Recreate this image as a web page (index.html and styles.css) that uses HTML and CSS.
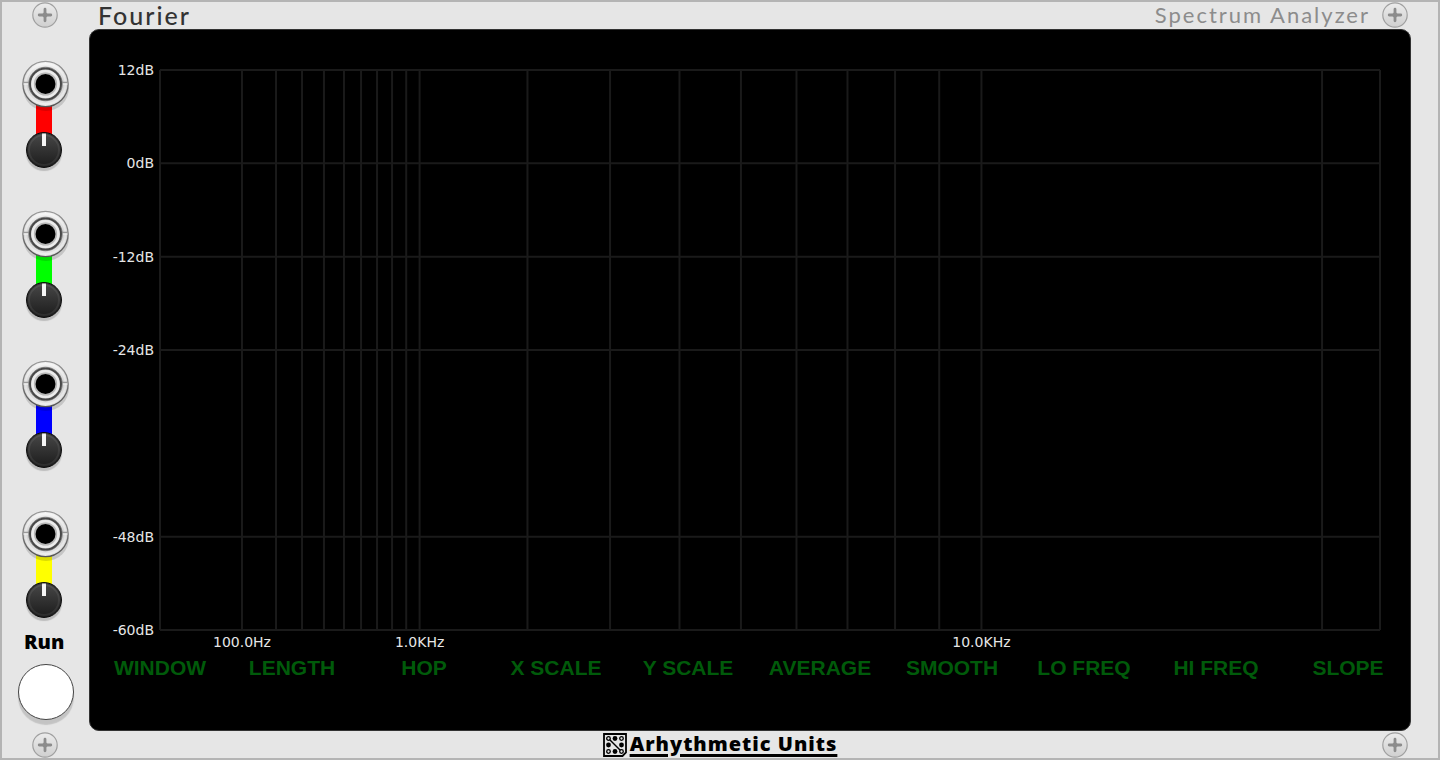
FILE: index.html
```html
<!DOCTYPE html>
<html lang="en">
<head>
<meta charset="utf-8">
<title>Fourier – Spectrum Analyzer</title>
<link rel="stylesheet" href="styles.css">
</head>
<body>
<svg class="defs" aria-hidden="true">
  <defs>
    <linearGradient id="metal" x1="0" y1="0" x2="0" y2="1"><stop offset="0" stop-color="#ececec"/><stop offset="1" stop-color="#cfcfcf"/></linearGradient>
    <linearGradient id="ring" x1="0" y1="0" x2="0" y2="1"><stop offset="0" stop-color="#f4f4f4"/><stop offset=".5" stop-color="#d2d2d2"/><stop offset="1" stop-color="#e6e6e6"/></linearGradient>
    <linearGradient id="rim" x1="0" y1="0" x2="0" y2="1"><stop offset="0" stop-color="#999"/><stop offset="1" stop-color="#555"/></linearGradient>
    <symbol id="screw" viewBox="0 0 26 26">
      <circle cx="13" cy="13" r="12.2" fill="url(#metal)" stroke="#a0a0a0" stroke-width="1.2"/>
      <path d="M13 7.2v11.600M7.200 13h11.600" stroke="#8c8c8c" stroke-width="2.800" stroke-linecap="round"/>
      <path d="M9.500 13L13 9.500 16.500 13 13 16.500z" fill="#8c8c8c"/>
    </symbol>
    <symbol id="jack" viewBox="0 0 50 54">
      <circle cx="25" cy="28" r="23" fill="#000" opacity=".14"/>
      <circle cx="24.500" cy="24" r="22.600" fill="url(#ring)" stroke="url(#rim)" stroke-width="1.300"/>
      <circle cx="24.500" cy="24" r="20" fill="none" stroke="#fff" stroke-opacity=".35" stroke-width="2"/>
      <path d="M2.500 22.500h6M40.500 22.500h6" stroke="#999" stroke-width="1.500"/>
      <path d="M2.500 24h6M40.500 24h6" stroke="#f5f5f5" stroke-width="1.200"/>
      <circle cx="24.500" cy="24" r="16.800" fill="none" stroke="#888" stroke-width="1"/>
      <circle cx="24.500" cy="24" r="15.500" fill="#d4d4d4" stroke="#484848" stroke-width="2"/>
      <circle cx="24.500" cy="24" r="12.800" fill="none" stroke="#ececec" stroke-width="2.500"/>
      <circle cx="24.500" cy="24" r="10.800" fill="none" stroke="#b8b8b8" stroke-width="1.600"/>
      <circle cx="24.500" cy="24" r="10" fill="#000"/>
    </symbol>
  </defs>
</svg>
<div class="module">
  <header class="rail">
    <svg class="screw"><use href="#screw"/></svg>
    <h1 class="title">Fourier</h1>
    <p class="subtitle">Spectrum Analyzer</p>
    <svg class="screw"><use href="#screw"/></svg>
  </header>
  <main class="body">
    <aside class="controls">
      <div class="channel red">
        <button class="port" aria-label="Input 1"><svg class="jack"><use href="#jack"/></svg></button>
        <input class="knob" type="range" aria-label="Gain 1">
      </div>
      <div class="channel green">
        <button class="port" aria-label="Input 2"><svg class="jack"><use href="#jack"/></svg></button>
        <input class="knob" type="range" aria-label="Gain 2">
      </div>
      <div class="channel blue">
        <button class="port" aria-label="Input 3"><svg class="jack"><use href="#jack"/></svg></button>
        <input class="knob" type="range" aria-label="Gain 3">
      </div>
      <div class="channel yellow">
        <button class="port" aria-label="Input 4"><svg class="jack"><use href="#jack"/></svg></button>
        <input class="knob" type="range" aria-label="Gain 4">
      </div>
      <div class="run">
        <span class="run-label" id="run-label">Run</span>
        <button class="run-button" aria-labelledby="run-label"></button>
      </div>
    </aside>
    <section class="screen">
      <div class="chart">
        <svg class="plot" aria-label="Spectrum">
          <g class="lines">
            <line x1="0" x2="100%" y1="0" y2="0"/>
            <line x1="0" x2="100%" y1="16.67%" y2="16.67%"/>
            <line x1="0" x2="100%" y1="33.33%" y2="33.33%"/>
            <line x1="0" x2="100%" y1="50%" y2="50%"/>
            <line x1="0" x2="100%" y1="83.33%" y2="83.33%"/>
            <line x1="0" x2="100%" y1="100%" y2="100%"/>
            <line x1="0" x2="0" y1="0" y2="100%"/>
            <line x1="6.72%" x2="6.72%" y1="0" y2="100%"/>
            <line x1="9.51%" x2="9.51%" y1="0" y2="100%"/>
            <line x1="11.64%" x2="11.64%" y1="0" y2="100%"/>
            <line x1="13.44%" x2="13.44%" y1="0" y2="100%"/>
            <line x1="15.08%" x2="15.08%" y1="0" y2="100%"/>
            <line x1="16.48%" x2="16.48%" y1="0" y2="100%"/>
            <line x1="17.79%" x2="17.79%" y1="0" y2="100%"/>
            <line x1="19.02%" x2="19.02%" y1="0" y2="100%"/>
            <line x1="20.18%" x2="20.18%" y1="0" y2="100%"/>
            <line x1="21.28%" x2="21.28%" y1="0" y2="100%"/>
            <line x1="30.12%" x2="30.12%" y1="0" y2="100%"/>
            <line x1="36.89%" x2="36.89%" y1="0" y2="100%"/>
            <line x1="42.58%" x2="42.58%" y1="0" y2="100%"/>
            <line x1="47.62%" x2="47.62%" y1="0" y2="100%"/>
            <line x1="52.17%" x2="52.17%" y1="0" y2="100%"/>
            <line x1="56.35%" x2="56.35%" y1="0" y2="100%"/>
            <line x1="60.25%" x2="60.25%" y1="0" y2="100%"/>
            <line x1="63.87%" x2="63.87%" y1="0" y2="100%"/>
            <line x1="67.33%" x2="67.33%" y1="0" y2="100%"/>
            <line x1="95.25%" x2="95.25%" y1="0" y2="100%"/>
            <line x1="100%" x2="100%" y1="0" y2="100%"/>
          </g>
          <g class="y-labels">
            <text x="0" y="0" dx="-6" dy="5">12dB</text>
            <text x="0" y="16.67%" dx="-6" dy="5">0dB</text>
            <text x="0" y="33.33%" dx="-6" dy="5">-12dB</text>
            <text x="0" y="50%" dx="-6" dy="5">-24dB</text>
            <text x="0" y="83.33%" dx="-6" dy="5">-48dB</text>
            <text x="0" y="100%" dx="-6" dy="5">-60dB</text>
          </g>
          <g class="x-labels">
            <text x="6.72%" y="100%" dy="17">100.0Hz</text>
            <text x="21.28%" y="100%" dy="17">1.0KHz</text>
            <text x="67.33%" y="100%" dy="17">10.0KHz</text>
          </g>
        </svg>
      </div>
      <nav class="menu">
        <button>WINDOW</button><button>LENGTH</button><button>HOP</button><button>X SCALE</button><button>Y SCALE</button><button>AVERAGE</button><button>SMOOTH</button><button>LO FREQ</button><button>HI FREQ</button><button>SLOPE</button>
      </nav>
    </section>
  </main>
  <footer class="rail">
    <svg class="screw"><use href="#screw"/></svg>
    <a class="brand" href="#">
      <svg class="logo" viewBox="0 0 24 24" aria-hidden="true">
        <path d="M1 1h22v18.500L19.500 23H1z" fill="none" stroke="#000" stroke-width="1.800"/>
        <path d="M6 6l12 12" stroke="#000" stroke-width="1.400"/>
        <g fill="#e6e6e6" stroke="#000" stroke-width="1.300"><circle cx="5.500" cy="5.500" r="1.800"/><circle cx="18.500" cy="5.500" r="1.800"/><circle cx="5.500" cy="18.500" r="1.800"/><circle cx="18.500" cy="18.500" r="1.800"/></g>
        <circle cx="12" cy="5.500" r="2.400"/><circle cx="5.500" cy="12" r="2.400"/><circle cx="18.500" cy="12" r="2.400"/><circle cx="12" cy="18.500" r="2.400"/>
      </svg>
      <span class="brand-name">Arhythmetic Units</span>
    </a>
    <svg class="screw"><use href="#screw"/></svg>
  </footer>
</div>
</body>
</html>
```
FILE: styles.css
```css
* { box-sizing: border-box; }
body { margin: 0; background: #b4b4b4; font-family: Lato, "Liberation Sans", sans-serif; }
button { border: 0; padding: 0; background: none; font: inherit; cursor: pointer; }
.defs { position: absolute; width: 0; height: 0; }
.module {
  display: flex;
  flex-direction: column;
  min-height: 100vh;
  background: #e6e6e6;
  box-shadow: inset 0 0 0 2px #b4b4b4;
}
.rail { display: flex; align-items: center; justify-content: space-between; height: 29px; padding: 0 32px; }
footer.rail { padding-bottom: 2px; }
.screw { flex: none; width: 26px; height: 26px; }
.title, .subtitle { margin: 0; line-height: 28px; letter-spacing: 2px; }
.title { margin-left: 40px; font-size: 25px; font-weight: 500; color: #333; }
.subtitle { margin: 0 12px 0 auto; font-size: 22px; color: #8c8c8c; }
.body { display: flex; flex: 1; padding-right: 29px; }
.controls { display: flex; flex: none; flex-direction: column; width: 89px; padding-top: 31px; }
.channel {
  display: flex;
  flex-direction: column;
  align-items: flex-start;
  height: 150px;
  background: linear-gradient(var(--signal), var(--signal)) 36px 24px / 16px 60px no-repeat;
}
.channel.yellow { height: 120px; }
.red { --signal: #f00; }
.green { --signal: #0f0; }
.blue { --signal: #00f; }
.yellow { --signal: #ff0; }
.port { height: 54px; margin-left: 21px; }
.jack { display: block; width: 50px; height: 54px; }
.knob {
  appearance: none;
  width: 36px;
  height: 36px;
  margin: 18px 0 0 26px;
  border: 1px solid #0a0a0a;
  border-radius: 50%;
  background: linear-gradient(#f5f5f5, #f5f5f5) 50% 0 / 4px 13px no-repeat, linear-gradient(#484848, #1c1c1c);
  box-shadow: inset 0 0 0 1px #0a0a0a66, inset 0 0 0 3px #ffffff12, 0 3px 1px #0000002e;
}
.knob::-webkit-slider-thumb { appearance: none; width: 1px; height: 1px; }
.run { display: flex; flex-direction: column; align-items: flex-start; }
.run-label { margin-left: 24px; font: 800 20px/24px "Open Sans", sans-serif; color: #000; }
.run-button {
  width: 56px;
  height: 56px;
  margin: 10px 0 0 18px;
  border: 1px solid #444;
  border-radius: 50%;
  background: #fff;
  box-shadow: 0 5px 1px #00000026;
}
.screen {
  display: flex;
  flex: 1;
  flex-direction: column;
  border: 1px solid #333;
  border-radius: 10px;
  background: #000;
}
.chart { display: flex; flex: 1; padding: 40px 30px 0 70px; }
.plot { flex: 1; width: 100%; min-height: 400px; overflow: visible; font: 14px "DejaVu Sans", sans-serif; }
.lines { stroke: #1a1a1a; stroke-width: 2px; }
.y-labels, .x-labels { fill: #e6e6e6; }
.y-labels { text-anchor: end; }
.x-labels { text-anchor: middle; }
.menu { display: grid; grid-template-columns: repeat(10, 1fr); padding: 26px 0 50px; }
.menu button {
  padding-left: 8px;
  font: bold 21px/24px "Liberation Sans", Arial, sans-serif;
  color: #005a0a;
  white-space: nowrap;
}
.brand { display: flex; align-items: center; gap: 3px; color: #000; text-decoration: none; }
.logo { width: 24px; height: 24px; }
.brand-name {
  padding-bottom: 2px;
  font: 800 20px/24px "Open Sans", sans-serif;
  letter-spacing: 1px;
  text-decoration: underline 3px;
  text-underline-offset: 3px;
}
```
